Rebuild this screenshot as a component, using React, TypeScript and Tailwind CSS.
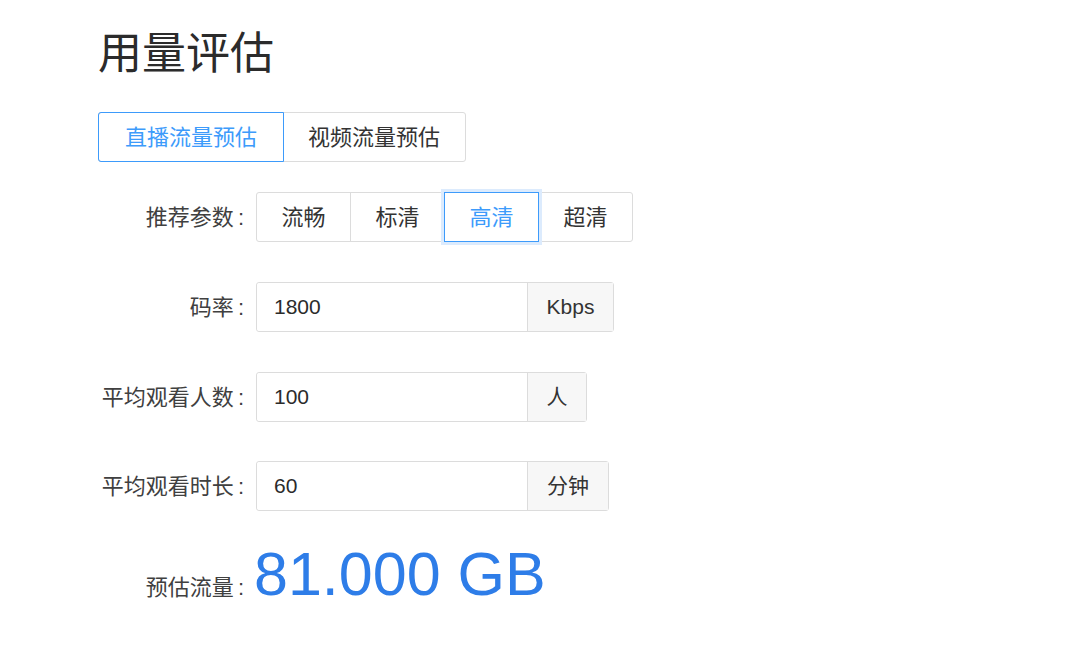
import { useState } from "react";

const FONT = "font-['Liberation_Sans','Noto_Sans_CJK_SC',sans-serif]";

const presets = [
  { key: "smooth", label: "流畅", kbps: 800, width: "w-[93px]" },
  { key: "sd", label: "标清", kbps: 1200, width: "w-[94px]" },
  { key: "hd", label: "高清", kbps: 1800, width: "w-[95px]" },
  { key: "uhd", label: "超清", kbps: 3000, width: "w-[93px]" },
];

function FieldLabel({ text }: { text: string }) {
  return (
    <div className="w-[146px] shrink-0 text-right text-[22px] text-[#404040]">
      {text}
      <span className="ml-[4px]">:</span>
    </div>
  );
}

function AddonInput({
  value,
  unit,
  unitWidth,
  onChange,
}: {
  value: number;
  unit: string;
  unitWidth: string;
  onChange: (v: number) => void;
}) {
  return (
    <div className="flex h-[50px] rounded-[3px] border border-[#dcdcdc]">
      <input
        value={value}
        onChange={(e) => onChange(Number(e.target.value) || 0)}
        className="w-[270px] rounded-l-[3px] bg-white px-[17px] text-[21px] text-[#2b2b2b] outline-none"
      />
      <div
        className={`${unitWidth} flex items-center justify-center border-l border-[#dcdcdc] bg-[#f7f7f7] text-[21px] text-[#333]`}
      >
        {unit}
      </div>
    </div>
  );
}

export default function App() {
  const [tab, setTab] = useState<"live" | "video">("live");
  const [preset, setPreset] = useState("hd");
  const [bitrate, setBitrate] = useState(1800);
  const [viewers, setViewers] = useState(100);
  const [minutes, setMinutes] = useState(60);

  // kbps * seconds * viewers -> GB (decimal)
  const traffic = (bitrate * minutes * 60 * viewers) / 8 / 1000 / 1000;
  const activeIndex = presets.findIndex((p) => p.key === preset);

  return (
    <div className={`${FONT} min-h-screen bg-white pl-[98px] pt-[24px] text-[#333]`}>
      <h1 className="text-[44px] leading-[60px] font-normal text-[#2b2b2b]">用量评估</h1>

      <div className="mt-[28px] flex h-[50px] w-fit rounded-[3px] border border-[#dcdcdc]">
        <button
          type="button"
          onClick={() => setTab("live")}
          className={
            tab === "live"
              ? "-m-px w-[186px] rounded-l-[3px] border border-[#3d9bfb] text-[22px] text-[#3d9bfb]"
              : "w-[185px] text-[22px] text-[#333]"
          }
        >
          直播流量预估
        </button>
        <button
          type="button"
          onClick={() => setTab("video")}
          className={
            tab === "video"
              ? "-m-px w-[184px] rounded-r-[3px] border border-[#3d9bfb] text-[22px] text-[#3d9bfb]"
              : "w-[182px] text-[22px] text-[#333]"
          }
        >
          视频流量预估
        </button>
      </div>

      <div className="mt-[30px] flex h-[50px] items-center gap-[12px]">
        <FieldLabel text="推荐参数" />
        <div className="flex h-[50px] rounded-[3px] border border-[#dcdcdc]">
          {presets.map((p, i) => {
            const active = i === activeIndex;
            const divider = i > 0 && !active && i - 1 !== activeIndex;
            return (
              <button
                key={p.key}
                type="button"
                onClick={() => {
                  setPreset(p.key);
                  setBitrate(p.kbps);
                }}
                className={`${p.width} text-[22px] ${
                  active
                    ? "relative -my-px border border-[#3d9bfb] text-[#3d9bfb] shadow-[0_0_0_3px_#dcebfd]"
                    : divider
                      ? "border-l border-[#dcdcdc] text-[#333]"
                      : "text-[#333]"
                }`}
              >
                {p.label}
              </button>
            );
          })}
        </div>
      </div>

      <div className="mt-[40px] flex items-center gap-[12px]">
        <FieldLabel text="码率" />
        <AddonInput value={bitrate} unit="Kbps" unitWidth="w-[86px]" onChange={setBitrate} />
      </div>

      <div className="mt-[40px] flex items-center gap-[12px]">
        <FieldLabel text="平均观看人数" />
        <AddonInput value={viewers} unit="人" unitWidth="w-[59px]" onChange={setViewers} />
      </div>

      <div className="mt-[39px] flex items-center gap-[12px]">
        <FieldLabel text="平均观看时长" />
        <AddonInput value={minutes} unit="分钟" unitWidth="w-[81px]" onChange={setMinutes} />
      </div>

      <div className="mt-[28px] flex items-baseline gap-[10px]">
        <FieldLabel text="预估流量" />
        <div className="text-[61px] leading-[70px] text-[#2e7de8]">{traffic.toFixed(3)} GB</div>
      </div>
    </div>
  );
}
